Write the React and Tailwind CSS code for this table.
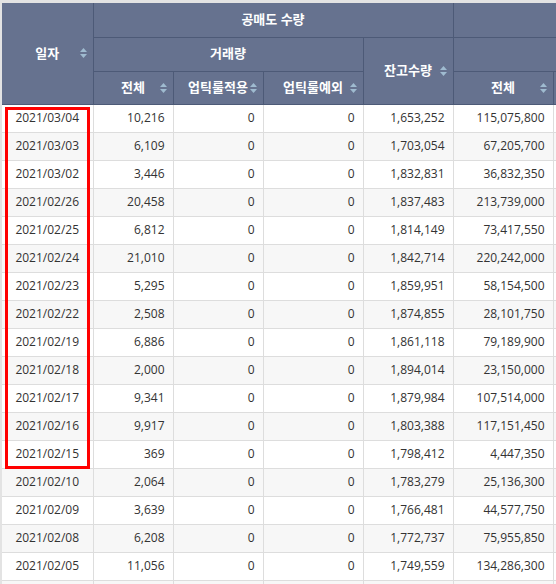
const rows = [
  ["2021/03/04", "10,216", "0", "0", "1,653,252", "115,075,800"],
  ["2021/03/03", "6,109", "0", "0", "1,703,054", "67,205,700"],
  ["2021/03/02", "3,446", "0", "0", "1,832,831", "36,832,350"],
  ["2021/02/26", "20,458", "0", "0", "1,837,483", "213,739,000"],
  ["2021/02/25", "6,812", "0", "0", "1,814,149", "73,417,550"],
  ["2021/02/24", "21,010", "0", "0", "1,842,714", "220,242,000"],
  ["2021/02/23", "5,295", "0", "0", "1,859,951", "58,154,500"],
  ["2021/02/22", "2,508", "0", "0", "1,874,855", "28,101,750"],
  ["2021/02/19", "6,886", "0", "0", "1,861,118", "79,189,900"],
  ["2021/02/18", "2,000", "0", "0", "1,894,014", "23,150,000"],
  ["2021/02/17", "9,341", "0", "0", "1,879,984", "107,514,000"],
  ["2021/02/16", "9,917", "0", "0", "1,803,388", "117,151,450"],
  ["2021/02/15", "369", "0", "0", "1,798,412", "4,447,350"],
  ["2021/02/10", "2,064", "0", "0", "1,783,279", "25,136,300"],
  ["2021/02/09", "3,639", "0", "0", "1,766,481", "44,577,750"],
  ["2021/02/08", "6,208", "0", "0", "1,772,737", "75,955,850"],
  ["2021/02/05", "11,056", "0", "0", "1,749,559", "134,286,300"],
  ["", "", "", "", "", ""],
];

const SortIcon = () => (
  <svg width="7" height="11" viewBox="0 0 7 11" className="absolute right-[6px] top-1/2 -translate-y-1/2">
    <polygon points="0,4.5 3.5,0.5 7,4.5" fill="#9fbbd0" />
    <polygon points="0,6.5 3.5,10.5 7,6.5" fill="#9fbbd0" />
  </svg>
);

const Th = ({ children, sort, className = "", ...rest }) => (
  <th
    {...rest}
    className={`relative border border-[#4d5a77] bg-[#66728f] p-0 text-center text-[13px] font-bold text-white ${className}`}
  >
    {children}
    {sort && <SortIcon />}
  </th>
);

export default function App() {
  return (
    <div className="relative h-[584px] w-[556px] overflow-hidden bg-white font-['Open_Sans','Noto_Sans_CJK_KR',sans-serif]">
      <div className="border-l-2 border-t-[3px] border-[#e3e3e3]">
        <table className="w-[700px] table-fixed border-collapse">
          <colgroup>
            <col className="w-[91px]" />
            <col className="w-[80px]" />
            <col className="w-[90px]" />
            <col className="w-[100px]" />
            <col className="w-[90px]" />
            <col className="w-[100px]" />
            <col className="w-[149px]" />
          </colgroup>
          <thead>
            <tr className="h-[34px]">
              <Th rowSpan={3} sort className="border-t-0 border-l-0">일자</Th>
              <Th colSpan={4} className="border-t-0">공매도 수량</Th>
              <Th colSpan={2} className="border-t-0" />
            </tr>
            <tr className="h-[34px]">
              <Th colSpan={3}>거래량</Th>
              <Th rowSpan={2} sort>잔고수량</Th>
              <Th colSpan={2} />
            </tr>
            <tr className="h-[33px]">
              <Th sort>전체</Th>
              <Th sort>업틱룰적용</Th>
              <Th sort>업틱룰예외</Th>
              <Th sort>전체</Th>
              <Th />
            </tr>
          </thead>
          <tbody>
            {rows.map((r, i) => (
              <tr key={i} className={`h-[28px] ${i % 2 === 1 ? "bg-[#f7f7f7]" : "bg-white"}`}>
                <td className="border border-l-0 border-[#dddddd] p-0 text-center text-[12px] text-[#333333]">{r[0]}</td>
                {r.slice(1).map((v, j) => (
                  <td key={j} className="border border-[#dddddd] py-0 pr-[8px] text-right text-[12px] text-[#333333]">{v}</td>
                ))}
                <td className="border border-[#dddddd] p-0" />
              </tr>
            ))}
          </tbody>
        </table>
      </div>
      <div className="absolute left-[5px] top-[107px] h-[362px] w-[85px] border-[3px] border-[#ff0000]" />
    </div>
  );
}
